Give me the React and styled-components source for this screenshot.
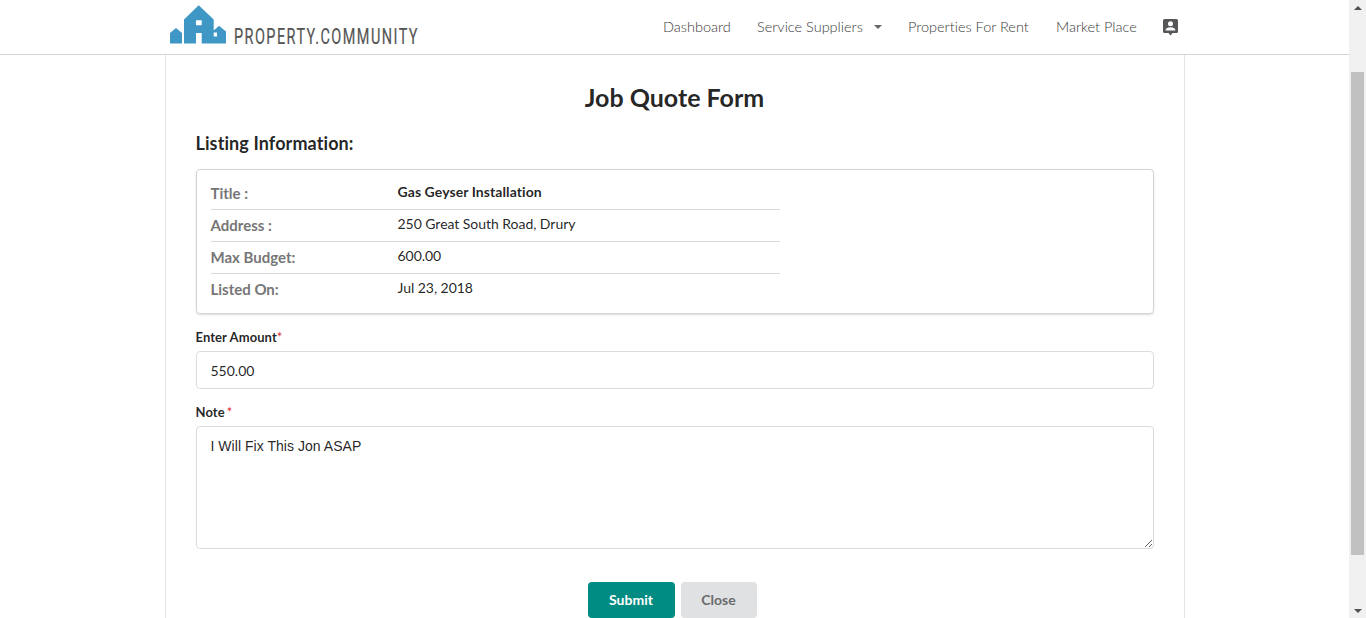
import React from 'react';
import styled, { createGlobalStyle } from 'styled-components';

const Global = createGlobalStyle`
  *, *::before, *::after { box-sizing: border-box; }
  html, body { margin: 0; height: 618px; overflow: hidden; background: #fff; }
  body {
    font-family: Lato, sans-serif; font-size: 14px; line-height: 18px; color: rgba(0,0,0,.87);
    font-variant-ligatures: none;
  }
`;

const Window = styled.div`display: flex; height: 618px; overflow: hidden;`;
const Page = styled.div`flex: 1; display: flex; flex-direction: column; align-items: center;`;

const Header = styled.header`
  width: 100%; height: 55px; flex: none; border-bottom: 1px solid #d4d4d5;
  display: flex; justify-content: center;
`;
const HeaderInner = styled.div`
  width: 1010px; display: flex; justify-content: space-between;
`;
const Logo = styled.svg`display: block; width: 254px; height: 50px; overflow: visible;`;
const Wordmark = styled.text`
  font-family: Roboto, sans-serif; font-size: 21.8px; font-weight: 400; letter-spacing: 2.2px;
  fill: #555; stroke: #555; stroke-width: .2px;
`;
const Nav = styled.nav`display: flex; height: 54px; align-items: center;`;
const NavItem = styled.a`
  width: ${p => p.$w}px; font-size: 14.5px; font-weight: 300; color: #3a3a3a;
  white-space: nowrap; display: flex; align-items: center;
`;
const Caret = styled.i`
  margin-left: 11.5px; border: 4px solid transparent; border-top-color: #666; border-bottom: 0;
`;
const AccountIcon = styled.svg`width: 15px; height: 17px; display: block; margin-right: 1.5px;`;

const Panel = styled.main`
  flex: 1; width: 1020px; padding: 25px 30px 0; border: solid #e4e4e5; border-width: 0 1px;
`;
const Title = styled.h2`
  margin: 0; text-align: center; font-size: 25px; line-height: 34px; font-weight: 700;
`;
const Subtitle = styled.h3`
  margin: 17px 0 14px; font-size: 18px; line-height: 24px; font-weight: 700; letter-spacing: .1px;
`;

const Card = styled.section`
  height: 145px; padding: 8px 14px; border: 1px solid #d4d4d5; border-radius: 4px;
  box-shadow: 0 1px 2px rgba(34,36,38,.15);
`;
const Row = styled.div`
  display: grid; grid-template-columns: 187px 1fr; width: 569px; height: 32px;
  border-bottom: 1px solid ${p => (p.$last ? 'transparent' : '#d9d9da')};
`;
const Term = styled.span`font-size: 15px; font-weight: 700; line-height: 30px; color: #767676;`;
const Value = styled.span`
  line-height: 28px; font-weight: ${p => (p.$bold ? 700 : 400)};
  letter-spacing: ${p => (p.$bold ? 0.08 : -0.04)}px;
`;

const Label = styled.label`
  display: block; margin: ${p => p.$top}px 0 5px; font-size: 13px; line-height: 18px; font-weight: 700;
  letter-spacing: .08px;
`;
const Star = styled.span`color: #db2828; font-weight: 400; margin-left: ${p => p.$gap || 0}px;`;
const Input = styled.input`
  display: block; width: 100%; height: 38px; padding: 0 14px; border: 1px solid #dcdcdd;
  border-radius: 4px; font: 14px Lato, sans-serif; color: rgba(0,0,0,.87); outline: 0;
`;
const TextArea = styled.textarea`
  display: block; width: 100%; height: 123px; padding: 10px 14px; border: 1px solid #dcdcdd;
  border-radius: 4px; font: 14px/18px "Liberation Sans", sans-serif; letter-spacing: .04px;
  color: rgba(0,0,0,.87); outline: 0; resize: vertical;
`;
const Actions = styled.div`display: flex; justify-content: center; gap: 6px; margin: 33px 5px 0 0;`;
const Button = styled.button`
  width: ${p => p.$w}px; height: 36px; padding: 0 0 2px; border: 0; border-radius: 4px;
  font: 700 14px Lato, sans-serif;
  color: ${p => (p.$primary ? '#fff' : '#6a6a6b')};
  background: ${p => (p.$primary ? '#008c82' : '#e0e1e2')};
`;

const Scrollbar = styled.div`
  width: 17px; background: #f1f1f1; display: flex; flex-direction: column; align-items: center;
  padding: 6px 0 5px;
`;
const Arrow = styled.i`
  border: 4px solid transparent;
  ${p => (p.$up ? 'border-bottom-color: #505050; border-top: 0;' : 'border-top-color: #505050; border-bottom: 0;')}
`;
const Thumb = styled.div`width: 13px; height: 483px; margin: 62px 0 auto; background: #c1c1c1;`;

const listing = [
  ['Title :', 'Gas Geyser Installation'],
  ['Address :', '250 Great South Road, Drury'],
  ['Max Budget:', '600.00'],
  ['Listed On:', 'Jul 23, 2018'],
];

export default function App() {
  return (
    <Window>
      <Global />
      <Page>
        <Header>
          <HeaderInner>
            <Logo viewBox="0 0 254 50">
              <g fill="#3f97c5">
                <path d="M0 43.5V33l6-5 6 5v10.500z" />
                <path fillRule="evenodd" d="M14 43.500V19.500L28.700 5.300 43.700 19.500V30.500L49 25.700 56 31.500V43.500H31.700V33H26V43.500zM26 20.300V25.300H31.700V20.300zM43.700 32.500V36.500H47V32.500z" />
              </g>
              <Wordmark x="64" y="43.500" textLength="185" lengthAdjust="spacingAndGlyphs">PROPERTY.COMMUNITY</Wordmark>
            </Logo>
            <Nav>
              <NavItem $w={94}>Dashboard</NavItem>
              <NavItem $w={151}>Service Suppliers<Caret /></NavItem>
              <NavItem $w={148}>Properties For Rent</NavItem>
              <NavItem $w={107}>Market Place</NavItem>
              <AccountIcon viewBox="0 0 15 17">
                <path fill="#555759" fillRule="evenodd" d="M1.500 0h12A1.500 1.500 0 0 1 15 1.500v11A1.500 1.500 0 0 1 13.500 14h-4l-2 2.500-2-2.500h-4A1.500 1.500 0 0 1 0 12.500v-11A1.500 1.500 0 0 1 1.500 0zM7.500 2.300a2.500 2.500 0 1 0 0 5 2.500 2.500 0 0 0 0-5zM2.700 11.600h9.600v-.8c0-1.600-3.200-2.500-4.800-2.500s-4.800.9-4.800 2.500z" />
              </AccountIcon>
            </Nav>
          </HeaderInner>
        </Header>
        <Panel>
          <Title>Job Quote Form</Title>
          <Subtitle>Listing Information:</Subtitle>
          <Card>
            {listing.map(([term, value], i) => (
              <Row key={term} $last={i === listing.length - 1}>
                <Term>{term}</Term>
                <Value $bold={i === 0}>{value}</Value>
              </Row>
            ))}
          </Card>
          <Label $top={14}>Enter Amount<Star>*</Star></Label>
          <Input defaultValue="550.00" />
          <Label $top={14}>Note<Star $gap={2}>*</Star></Label>
          <TextArea defaultValue="I Will Fix This Jon ASAP" spellCheck={false} />
          <Actions>
            <Button $primary $w={87}>Submit</Button>
            <Button $w={76}>Close</Button>
          </Actions>
        </Panel>
      </Page>
      <Scrollbar>
        <Arrow $up />
        <Thumb />
        <Arrow />
      </Scrollbar>
    </Window>
  );
}
